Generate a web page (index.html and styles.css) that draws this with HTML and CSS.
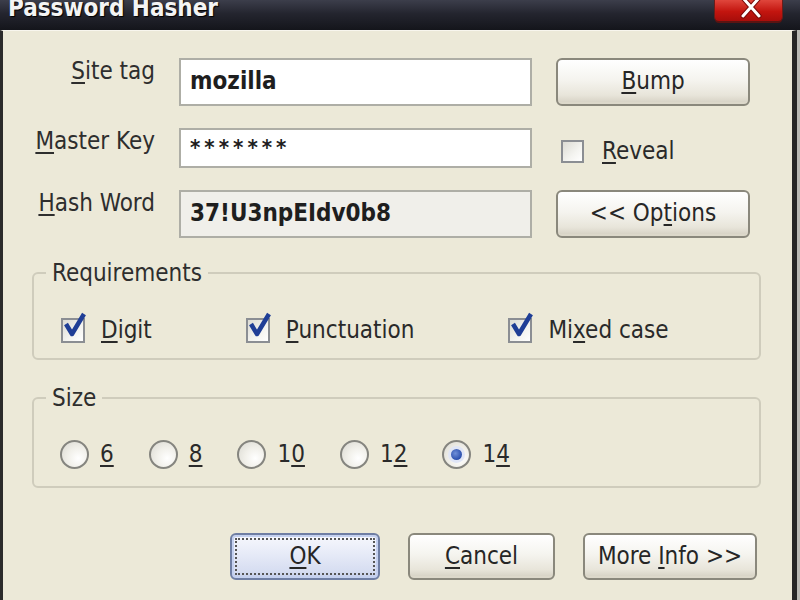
FILE: index.html
```html
<!DOCTYPE html>
<html>
<head>
<meta charset="utf-8">
<title>Password Hasher</title>
<link rel="stylesheet" href="styles.css">
</head>
<body>
<div class="window">
  <div class="titlebar">
    <span class="title">Password Hasher</span>
    <div class="close">
      <svg class="close-x" width="22" height="20" viewBox="0 0 22 20"><path d="M3 -2 L19 16 M19 -2 L3 16" stroke="#7a0a08" stroke-width="5" stroke-linecap="round"/><path d="M3 -2 L19 16 M19 -2 L3 16" stroke="#ffffff" stroke-width="3" stroke-linecap="round"/></svg>
    </div>
  </div>
  <div class="frame">
    <div class="client">
      <div class="form">
        <label class="lbl"><u>S</u>ite tag</label>
        <div class="field">mozilla</div>
        <button class="btn side"><u>B</u>ump</button>

        <label class="lbl"><u>M</u>aster Key</label>
        <div class="field pw">*******</div>
        <div class="check reveal"><span class="box"></span><span><u>R</u>eveal</span></div>

        <label class="lbl"><u>H</u>ash Word</label>
        <div class="field ro">37!U3npEIdv0b8</div>
        <button class="btn side">&lt;&lt; Op<u>t</u>ions</button>
      </div>

      <fieldset class="group req">
        <legend>Requirements</legend>
        <div class="checks">
          <div class="check"><span class="box on"><svg class="tick" width="26" height="30" viewBox="0 0 26 30"><path d="M4 12 L10 22 L22 2" fill="none" stroke="#1f3e96" stroke-width="4.5" stroke-linejoin="round"/></svg></span><span><u>D</u>igit</span></div>
          <div class="check"><span class="box on"><svg class="tick" width="26" height="30" viewBox="0 0 26 30"><path d="M4 12 L10 22 L22 2" fill="none" stroke="#1f3e96" stroke-width="4.5" stroke-linejoin="round"/></svg></span><span><u>P</u>unctuation</span></div>
          <div class="check"><span class="box on"><svg class="tick" width="26" height="30" viewBox="0 0 26 30"><path d="M4 12 L10 22 L22 2" fill="none" stroke="#1f3e96" stroke-width="4.5" stroke-linejoin="round"/></svg></span><span>Mi<u>x</u>ed case</span></div>
        </div>
      </fieldset>

      <fieldset class="group size">
        <legend>Size</legend>
        <div class="radios">
          <div class="radio"><span class="dot"></span><span><u>6</u></span></div>
          <div class="radio"><span class="dot"></span><span><u>8</u></span></div>
          <div class="radio"><span class="dot"></span><span>1<u>0</u></span></div>
          <div class="radio"><span class="dot"></span><span>1<u>2</u></span></div>
          <div class="radio"><span class="dot on"></span><span>1<u>4</u></span></div>
        </div>
      </fieldset>

      <div class="actions">
        <button class="btn ok"><u>O</u>K</button>
        <button class="btn cancel"><u>C</u>ancel</button>
        <button class="btn more">More <u>I</u>nfo &gt;&gt;</button>
      </div>
    </div>
  </div>
</div>
</body>
</html>
```

FILE: styles.css
```css
* { box-sizing: border-box; }
html, body { margin: 0; padding: 0; }
body {
  width: 800px;
  height: 600px;
  overflow: hidden;
  font-family: "DejaVu Sans Condensed", "DejaVu Sans", sans-serif;
  font-size: 24px;
  color: #2a2a2a;
}
u { text-decoration-thickness: 2px; text-underline-offset: 3px; }

.window {
  width: 800px;
  height: 600px;
  display: flex;
  flex-direction: column;
  background: #b9b9b4;
}

.titlebar {
  height: 30px;
  flex: none;
  display: flex;
  align-items: flex-start;
  padding-left: 8px;
  background: linear-gradient(#3c3e4b 0%, #24252f 45%, #14151b 100%);
  overflow: hidden;
}
.title {
  font-weight: bold;
  font-size: 24px;
  line-height: 24px;
  margin-top: -4px;
  color: #f4f4f4;
  text-shadow: 1px 1px 1px #000;
}
.close {
  margin-left: auto;
  margin-right: 18px;
  width: 67px;
  height: 21px;
  border-radius: 0 0 4px 4px;
  background: linear-gradient(#e0463c, #c3150f 55%, #a70d0a);
  box-shadow: 0 2px 0 #5a1412, 0 0 0 1px #6a1d1a;
  display: flex;
  justify-content: center;
}
.close-x { display: block; margin-left: 4px; }

.frame {
  flex: 1;
  display: flex;
  margin-right: 3px;
}
.client {
  flex: 1;
  background: #ece9d8;
  border-left: 3px solid #2b2b2b;
  border-right: 5px solid #262626;
  border-top: 1px solid #f8f6ee;
  padding-top: 27px;
}

.form {
  display: grid;
  grid-template-columns: 152px 353px 194px;
  grid-template-rows: 48px 40px 48px;
  column-gap: 24px;
  row-gap: 22px;
}
.lbl {
  text-align: right;
  line-height: 26px;
  align-self: start;
  color: #2e2e2e;
}
.field {
  background: #fff;
  border: 2px solid #aeaea6;
  font-weight: bold;
  font-size: 24px;
  line-height: 26px;
  padding: 0 9px;
  display: flex;
  align-items: center;
  color: #1e1e1e;
  padding-bottom: 3px;
}
.field.pw { letter-spacing: 4px; font-size: 22px; padding-top: 2px; }
.field.ro { background: #f0efea; }

.btn {
  font-family: "DejaVu Sans Condensed", "DejaVu Sans", sans-serif;
  font-size: 24px;
  color: #262626;
  border: 2px solid #8a887c;
  border-radius: 6px;
  background: linear-gradient(#ffffff 0%, #f5f4ef 45%, #e8e5da 80%, #d3cfc1 100%);
  box-shadow: inset 0 -2px 0 #dcd8ca;
  padding: 0 0 2px;
}
.btn.side { height: 48px; align-self: center; margin-top: -1px; }

.check {
  display: flex;
  align-items: center;
  gap: 16px;
  line-height: 26px;
}
.reveal { margin-left: 5px; padding-top: 6px; gap: 18px; }
.box {
  position: relative;
  width: 23px;
  height: 23px;
  flex: none;
  border: 2px solid #8b8e93;
  background: linear-gradient(135deg, #dcdbd4, #f4f4f0 60%, #ffffff);
}
.box.on { width: 24px; height: 25px; }
.tick { position: absolute; left: -1px; top: -8px; }

.group {
  margin: 0;
  border: 2px solid #cfccbc;
  border-radius: 6px;
  padding: 0 12px;
}
.group legend {
  padding: 0 6px;
  line-height: 26px;
  color: #2e2e2e;
}
.req {
  margin: 22px 0 0 29px;
  width: 729px;
  padding-top: 29px;
  padding-bottom: 13px;
}
.checks {
  display: flex;
  gap: 94px;
  padding-left: 15px;
  height: 30px;
  align-items: center;
}
.size {
  margin: 25px 0 0 29px;
  width: 729px;
  padding-top: 28px;
  padding-bottom: 17px;
}
.radios {
  display: flex;
  gap: 35px;
  padding-left: 14px;
  height: 30px;
  align-items: center;
}
.radio {
  display: flex;
  align-items: center;
  gap: 11px;
  line-height: 26px;
}
.dot {
  width: 29px;
  height: 29px;
  border-radius: 50%;
  border: 2px solid #85857f;
  background: radial-gradient(circle at 65% 65%, #ffffff 0%, #f1f0ea 45%, #d9d8d0 100%);
  display: flex;
  align-items: center;
  justify-content: center;
}
.dot.on::after {
  content: "";
  width: 11px;
  height: 11px;
  border-radius: 50%;
  background: radial-gradient(circle at 40% 40%, #6f8fd8, #2a4fae 70%);
  box-shadow: 0 0 0 3px #dfe5f6;
}

.actions {
  display: flex;
  justify-content: flex-end;
  gap: 28px;
  margin-top: 45px;
  padding-right: 35px;
}
.actions .btn { height: 47px; }
.ok {
  width: 150px;
  border-color: #6f7ea3;
  background: linear-gradient(#f7f8fd 0%, #e6eaf7 45%, #d6ddf1 85%, #c3cde9 100%);
  box-shadow: inset 0 0 0 2px #c4d0ef;
  outline: 2px dotted #555;
  outline-offset: -7px;
}
.cancel { width: 147px; }
.more { width: 174px; }
```
